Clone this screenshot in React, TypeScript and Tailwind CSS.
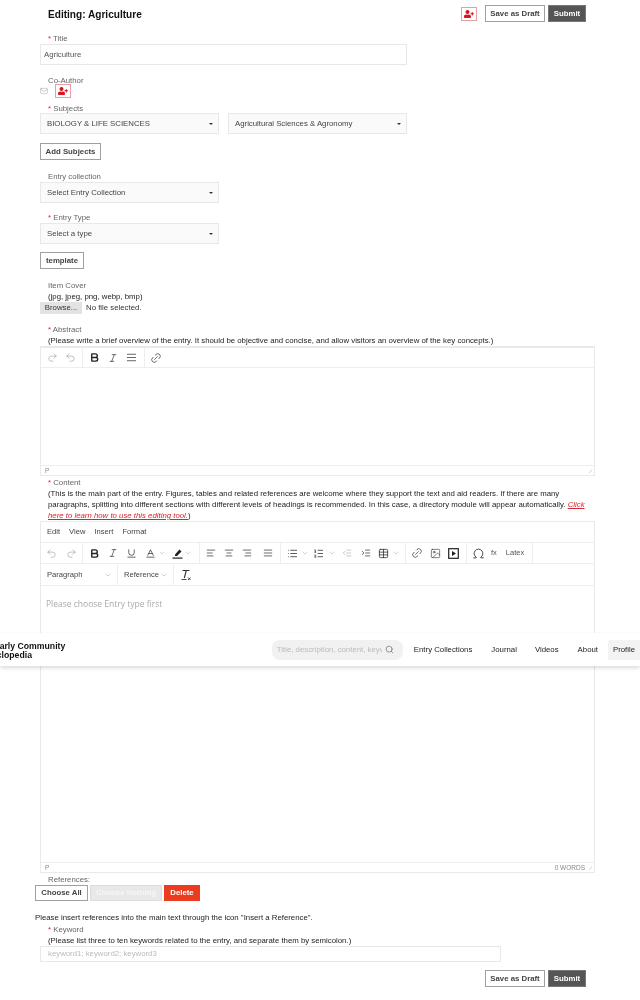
import React from "react";
import { FaUserPlus } from "react-icons/fa";
import {
  Mail, Undo2, Redo2, Bold, Italic, Underline, AlignLeft, AlignCenter, AlignRight, AlignJustify,
  List, ListOrdered, Outdent, Indent, Table, Link2, Image, Omega, ChevronDown, Baseline, Search,
} from "lucide-react";

const Label = ({ children, req, className = "" }: { children: React.ReactNode; req?: boolean; className?: string }) => (
  <div className={`h-[12px] pl-2 pt-[1px] text-[7.8px] leading-[12px] text-[#666] ${className}`}>
    {req && <span className="text-[#d9232d]">* </span>}
    {children}
  </div>
);

const Hint = ({ children, className = "" }: { children: React.ReactNode; className?: string }) => (
  <div className={`pl-2 text-[7.8px] leading-[11px] text-[#222] ${className}`}>{children}</div>
);

const Select = ({ text, className = "" }: { text: string; className?: string }) => (
  <div className={`flex h-[21px] w-[179px] items-center justify-between border border-[#e8e8e8] bg-[#fafafa] pl-[6px] pr-[5px] text-[7.8px] text-[#444] ${className}`}>
    <span>{text}</span>
    <span className="h-0 w-0 border-x-[2px] border-t-[2px] border-x-transparent border-t-[#333]" />
  </div>
);

const OutlineBtn = ({ children, className = "" }: { children: React.ReactNode; className?: string }) => (
  <button className={`flex h-[17px] items-center justify-center border border-[#a0a0a0] bg-white text-[7.8px] font-bold text-[#444] ${className}`}>{children}</button>
);

const Actions = () => (
  <div className="flex gap-[3px]">
    <OutlineBtn className="w-[60px]">Save as Draft</OutlineBtn>
    <button className="flex h-[17px] w-[38px] items-center justify-center border border-[#777] bg-[#555] text-[7.8px] font-bold text-white">Submit</button>
  </div>
);

const RedUser = ({ className = "" }: { className?: string }) => (
  <span className={`flex h-[14px] w-[16px] items-center justify-center border border-[#e9a0a4] text-[#d9141e] ${className}`}>
    <FaUserPlus size={10} />
  </span>
);

const Sep = () => <span className="h-full w-px shrink-0 bg-[#eee]" />;
const Chev = () => <ChevronDown size={8} strokeWidth={1.25} className="shrink-0 text-[#999]" />;

const Marker = () => (
  <svg width="11" height="11" viewBox="0 0 11 11" className="-ml-[2px] shrink-0 text-[#222]">
    <path d="M3 6.5 7.5 1.5 9.5 3.5 5 8H3z" fill="currentColor" />
    <rect x="0.5" y="9.5" width="10" height="1.2" fill="currentColor" />
  </svg>
);

const VideoBox = () => (
  <svg width="11" height="11" viewBox="0 0 11 11" className="shrink-0 text-[#222]">
    <rect x="0.7" y="0.7" width="9.6" height="9.6" fill="none" stroke="currentColor" strokeWidth="1.2" />
    <path d="M4 3v5l4-2.5z" fill="currentColor" />
  </svg>
);

const ClearFormat = () => (
  <svg width="12" height="12" viewBox="0 0 12 12" className="ml-[6px] shrink-0 text-[#333]">
    <path d="M2.5 1.5h7M6.3 1.5 4.3 9" fill="none" stroke="currentColor" strokeWidth="1.1" />
    <path d="M1.5 10.5h5" stroke="currentColor" strokeWidth="0.9" />
    <path d="M8 8.5l2.5 2.5M10.5 8.5 8 11" stroke="currentColor" strokeWidth="0.9" />
  </svg>
);

export default function App() {
  const ic = "shrink-0 text-[#222]";
  return (
    <div className="relative h-[1000px] w-[640px] overflow-hidden bg-white font-['Liberation_Sans',Arial,sans-serif] blur-[0.3px]">
      <div className="flex h-[27px] items-start pl-[48px] pr-[54px] pt-[5px]">
        <h1 className="mt-[4px] text-[10.1px] font-bold leading-[12px] text-[#111]">Editing: Agriculture</h1>
        <RedUser className="ml-auto mr-[8px] mt-[2px]" />
        <Actions />
      </div>

      <div className="ml-[40px] w-[555px]">
        <Label req className="mt-[5px]">Title</Label>
        <div className="flex h-[21px] w-[367px] items-center border border-[#e8e8e8] pl-[3px] text-[7.8px] text-[#555]">Agriculture</div>

        <Label className="mt-[9px]">Co-Author</Label>
        <div className="-mt-[2px] flex h-[14px] items-center">
          <Mail size={8} strokeWidth={1} className="text-[#777]" />
          <RedUser className="ml-[7px]" />
        </div>
        <Label req className="mt-[4px]">Subjects</Label>
        <div className="-mt-[1px] flex gap-[9px]">
          <Select text="BIOLOGY & LIFE SCIENCES" />
          <Select text="Agricultural Sciences & Agronomy" />
        </div>
        <OutlineBtn className="mt-[9px] w-[61px]">Add Subjects</OutlineBtn>

        <Label className="mt-[10px]">Entry collection</Label>
        <Select text="Select Entry Collection" />
        <Label req className="mt-[8px]">Entry Type</Label>
        <Select text="Select a type" />
        <OutlineBtn className="mt-[8px] w-[44px]">template</OutlineBtn>

        <Label className="mt-[10px]">Item Cover</Label>
        <Hint>(jpg, jpeg, png, webp, bmp)</Hint>
        <div className="flex h-[12px] items-center text-[7.8px] text-[#333]">
          <span className="flex h-[12px] w-[42px] items-center justify-center bg-[#e3e3e3]">Browse...</span>
          <span className="ml-[4px]">No file selected.</span>
        </div>

        <Label req className="mt-[9px]">Abstract</Label>
        <Hint>(Please write a brief overview of the entry. It should be objective and concise, and allow visitors an overview of the key concepts.)</Hint>

        <div className="flex h-[130px] flex-col border border-t-2 border-[#eaeaea]">
          <div className="flex h-[20px] items-center border-b border-[#eee]">
            <div className="flex h-full w-[41px] items-center gap-[7px] pl-[6px] text-[#888]">
              <Redo2 size={11} strokeWidth={1.1} />
              <Undo2 size={11} strokeWidth={1.1} />
            </div>
            <Sep />
            <div className="flex h-full w-[61px] items-center gap-[8px] pl-[6px]">
              <Bold size={11} strokeWidth={3} className={ic} />
              <Italic size={10} strokeWidth={1.5} className={ic} />
              <AlignJustify size={11} strokeWidth={1.5} className={ic} />
            </div>
            <Sep />
            <Link2 size={12} strokeWidth={1.25} className={`${ic} ml-[5px] -rotate-45`} />
          </div>
          <div className="flex-1" />
          <div className="relative flex h-[10px] items-center border-t border-[#eee] pl-[4px] text-[6.5px] text-[#888]">
            P
            <span className="absolute bottom-[1px] right-[1px] text-[5px] leading-none text-[#888]">⟋</span>
          </div>
        </div>

        <Label req>Content</Label>
        <Hint>
          (This is the main part of the entry. Figures, tables and related references are welcome where they support the text and aid readers. If there are many paragraphs, splitting into different sections with different levels of headings is recommended. In this case, a directory module will appear automatically.{" "}
          <a className="italic text-[#d9232d] underline">Click here to learn how to use this editing tool.</a>)
        </Hint>

        <div className="flex h-[352px] flex-col border border-[#eaeaea]">
          <div className="flex h-[21px] items-center gap-[9px] border-b border-[#eee] pl-[6px] text-[7.6px] text-[#444]">
            <span>Edit</span><span>View</span><span>Insert</span><span>Format</span>
          </div>
          <div className="flex h-[21px] items-center border-b border-[#eee]">
            <div className="flex h-full w-[41px] items-center gap-[9px] pl-[5px] text-[#888]">
              <Undo2 size={11} strokeWidth={1.1} />
              <Redo2 size={11} strokeWidth={1.1} />
            </div>
            <Sep />
            <div className="flex h-full w-[116px] items-center gap-[8px] pl-[6px]">
              <Bold size={11} strokeWidth={3} className={ic} />
              <Italic size={10} strokeWidth={1.5} className={ic} />
              <Underline size={11} strokeWidth={1.5} className={ic} />
              <span className="flex items-center gap-[2px]"><Baseline size={11} strokeWidth={1.5} className={ic} /><Chev /></span>
              <span className="flex items-center gap-[1px]"><Marker /><Chev /></span>
            </div>
            <Sep />
            <div className="flex h-full w-[80px] items-center gap-[8px] pl-[6px]">
              <AlignLeft size={10} strokeWidth={1.6} className={ic} />
              <AlignCenter size={10} strokeWidth={1.6} className={ic} />
              <AlignRight size={10} strokeWidth={1.6} className={ic} />
              <AlignJustify size={10} strokeWidth={1.6} className={`${ic} ml-[3px]`} />
            </div>
            <Sep />
            <div className="flex h-full w-[124px] items-center gap-[3px] pl-[6px]">
              <List size={11} strokeWidth={1.6} className={ic} /><Chev />
              <ListOrdered size={11} strokeWidth={1.6} className={`${ic} ml-[1px]`} /><span className="ml-[1px]"><Chev /></span>
              <Outdent size={10} strokeWidth={1.25} className="ml-[3px] shrink-0 text-[#999]" />
              <Indent size={10} strokeWidth={1.6} className={`ml-[6px] ${ic}`} />
              <Table size={11} strokeWidth={1.6} className={`ml-[4px] ${ic}`} /><Chev />
            </div>
            <Sep />
            <div className="flex h-full w-[60px] items-center gap-[7px] pl-[5px]">
              <Link2 size={12} strokeWidth={1.25} className={`${ic} -rotate-45`} />
              <Image size={11} strokeWidth={1.25} className={ic} />
              <VideoBox />
            </div>
            <Sep />
            <div className="flex h-full w-[65px] items-center pl-[5px] text-[7.5px] text-[#555]">
              <Omega size={13} strokeWidth={1.5} className={ic} />
              <span className="ml-[6px]">fx</span>
              <span className="ml-[9px]">Latex</span>
            </div>
            <Sep />
          </div>
          <div className="flex h-[22px] items-center border-b border-[#eee] text-[7.6px] text-[#444]">
            <div className="flex h-full w-[76px] items-center justify-between pl-[6px] pr-[5px]"><span>Paragraph</span><Chev /></div>
            <Sep />
            <div className="flex h-full w-[55px] items-center justify-between pl-[6px] pr-[5px]"><span>Reference</span><Chev /></div>
            <Sep />
            <ClearFormat />
          </div>
          <div className="flex-1 pl-[5px] pt-[12px] font-['Open_Sans',sans-serif] text-[8.5px] text-[#aaa]">Please choose Entry type first</div>
          <div className="relative flex h-[10px] items-center justify-between border-t border-[#eee] pl-[4px] pr-[9px] text-[6.5px] text-[#888]">
            <span>P</span><span>0 WORDS</span>
            <span className="absolute bottom-[1px] right-[1px] text-[5px] leading-none text-[#888]">⟋</span>
          </div>
        </div>
      </div>

      <div className="ml-[35px]">
        <Label className="ml-[5px]">References:</Label>
        <div className="flex gap-[2px] text-[7.8px] font-bold">
          <button className="flex h-[16px] w-[53px] items-center justify-center border border-[#a0a0a0] text-[#444]">Choose All</button>
          <button className="flex h-[16px] w-[72px] items-center justify-center border border-[#ddd] bg-[#e8e8e8] text-[#f6f6f6]">Choose Nothing</button>
          <button className="flex h-[16px] w-[36px] items-center justify-center bg-[#ec3c20] text-white">Delete</button>
        </div>
        <div className="mt-[11px] text-[7.8px] leading-[11px] text-[#222]">Please insert references into the main text through the icon "Insert a Reference".</div>
        <Label req className="ml-[5px]">Keyword</Label>
        <Hint className="ml-[5px]">(Please list three to ten keywords related to the entry, and separate them by semicolon.)</Hint>
        <div className="ml-[5px] flex h-[16px] w-[461px] items-center border border-[#e8e8e8] pl-[7px] text-[7.8px] text-[#bbb]">keyword1; keyword2; keyword3</div>
      </div>
      <div className="mr-[54px] mt-[8px] flex justify-end"><Actions /></div>

      <div className="absolute left-0 right-0 top-[633px] flex h-[33px] items-center justify-between bg-white shadow-[0_2px_4px_rgba(0,0,0,0.15)]">
        <div className="-ml-[24px] mt-[3px] whitespace-nowrap text-[8.7px] font-bold leading-[9.5px] text-[#111]">Scholarly Community<br />Encyclopedia</div>
        <div className="flex items-center whitespace-nowrap text-[7.8px] text-[#222]">
          <div className="mr-[11px] flex h-[20px] w-[131px] items-center justify-between rounded-[8px] bg-[#f1f1f1] pl-[5px] pr-[9px] text-[#bbb]">
            <span className="w-[105px] overflow-hidden">Title, description, content, keywords</span>
            <Search size={9} className="text-[#777]" />
          </div>
          <span>Entry Collections</span>
          <span className="ml-[19px]">Journal</span>
          <span className="ml-[18px]">Videos</span>
          <span className="ml-[19px]">About</span>
          <span className="ml-[10px] flex h-[20px] w-[32px] items-center justify-center rounded-l-[2px] bg-[#f3f3f3]">Profile</span>
        </div>
      </div>
    </div>
  );
}
